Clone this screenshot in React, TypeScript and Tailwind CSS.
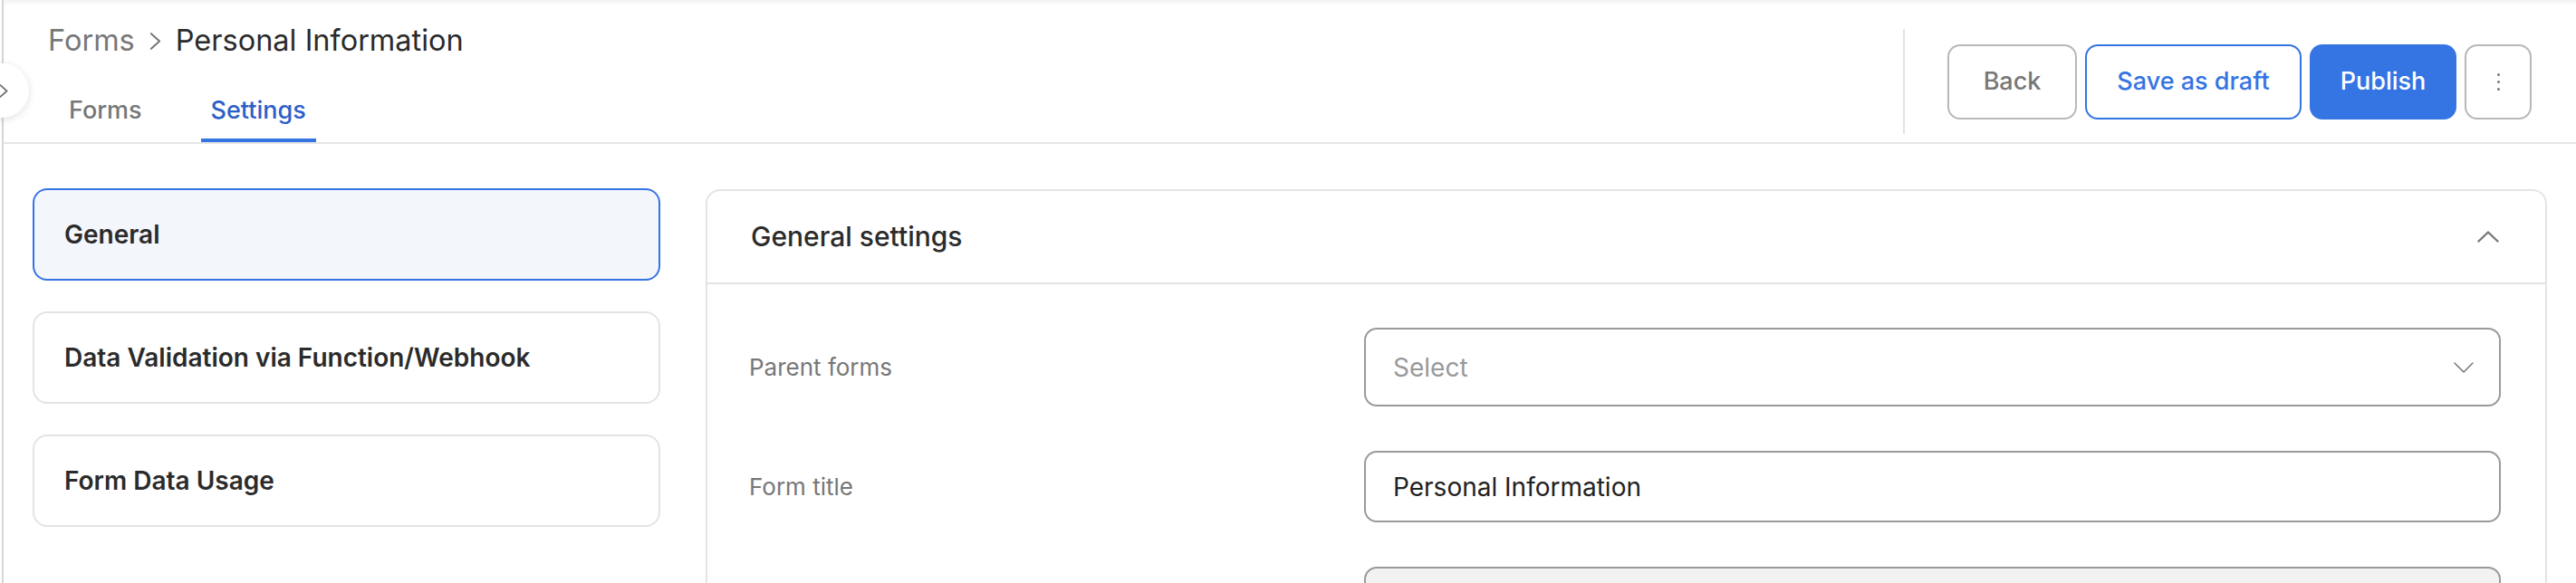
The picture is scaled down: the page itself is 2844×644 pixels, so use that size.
import React from "react";

function ChevronRight({ className, width = 2.2 }: { className?: string; width?: number }) {
  return (
    <svg className={className} viewBox="0 0 14 22" fill="none" stroke="currentColor" strokeWidth={width} strokeLinecap="round" strokeLinejoin="round">
      <polyline points="2,2 12,11 2,20" />
    </svg>
  );
}

function ChevronUp({ className }: { className?: string }) {
  return (
    <svg className={className} viewBox="0 0 24 13" fill="none" stroke="currentColor" strokeWidth="2.4" strokeLinecap="round" strokeLinejoin="round">
      <polyline points="1.5,11.5 12,1.5 22.5,11.5" />
    </svg>
  );
}

function ChevronDown({ className }: { className?: string }) {
  return (
    <svg className={className} viewBox="0 0 22 12" fill="none" stroke="currentColor" strokeWidth="1.5" strokeLinecap="round" strokeLinejoin="round">
      <polyline points="1,1 11,11 21,1" />
    </svg>
  );
}

const navItems = [
  { label: "General", active: true },
  { label: "Data Validation via Function/Webhook", active: false },
  { label: "Form Data Usage", active: false },
];

export default function App() {
  return (
    <div className="relative min-h-screen bg-white ml-[2px] border-l-2 border-[#d6d6d6] [font-family:Inter,'Noto_Sans',sans-serif] text-[#2b2b2b]">
      {/* collapse handle */}
      <div className="absolute left-[-32px] top-[70px] w-[60px] h-[60px] rounded-full bg-white shadow-[0_2px_10px_rgba(0,0,0,0.12)] flex items-center justify-center z-10">
        <ChevronRight className="w-[10px] h-[17px] text-[#777] ml-[3px]" width={2.6} />
      </div>

      {/* header */}
      <header className="flex justify-between h-[159px] border-b-2 border-[#e6e6e6] shadow-[inset_0_6px_6px_-4px_rgba(0,0,0,0.07)]">
        <div className="flex flex-col pl-[49px] pt-[25px]">
          <div className="flex items-center h-[40px] text-[32.5px] leading-[40px]">
            <span className="text-[#777]">Forms</span>
            <ChevronRight className="w-[13px] h-[21px] text-[#777] mx-[16px]" />
            <span className="text-[#2b2b2b]">Personal Information</span>
          </div>
          <div className="flex items-end mt-[39px] ml-[12px] gap-[54px]">
            <div className="px-[11px] pb-[13px] border-b-4 border-transparent text-[27px] leading-[36px] font-medium text-[#777]">
              Forms
            </div>
            <div className="px-[11px] pb-[13px] border-b-4 border-[#3574e3] text-[27px] leading-[36px] font-medium text-[#2d5fc9]">
              Settings
            </div>
          </div>
        </div>

        <div className="flex items-center self-start mt-[32px] h-[116px] mr-[49px]">
          <div className="w-[2px] h-full bg-[#e4e4e4]" />
          <div className="flex items-center gap-[9px] ml-[47px]">
            <button className="h-[83px] w-[143px] rounded-[14px] border-2 border-[#b8b8b8] bg-white text-[27px] font-medium text-[#777]">
              Back
            </button>
            <button className="h-[83px] w-[239px] rounded-[14px] border-2 border-[#3574e3] bg-white text-[27px] font-medium text-[#3574e3]">
              Save as draft
            </button>
            <button className="h-[83px] w-[162px] rounded-[14px] bg-[#3574e3] text-[27px] font-medium text-white">
              Publish
            </button>
            <button className="h-[83px] w-[74px] rounded-[14px] border-2 border-[#b8b8b8] bg-white flex flex-col items-center justify-center gap-[5px]">
              <span className="w-[3px] h-[3px] rounded-full bg-[#777]" />
              <span className="w-[3px] h-[3px] rounded-full bg-[#777]" />
              <span className="w-[3px] h-[3px] rounded-full bg-[#777]" />
            </button>
          </div>
        </div>
      </header>

      {/* body */}
      <div className="flex gap-[50px] px-[32px] pt-[49px]">
        <nav className="w-[693px] flex flex-col gap-[34px] shrink-0">
          {navItems.map((item) => (
            <div
              key={item.label}
              className={
                item.active
                  ? "h-[102px] rounded-[16px] border-2 border-[#3574e3] bg-[#f3f6fb] flex items-center px-[33px] text-[28px] font-semibold text-[#2b2b2b]"
                  : "h-[102px] rounded-[16px] border-2 border-[#e4e4e4] bg-white flex items-center px-[33px] text-[28px] font-semibold text-[#2b2b2b]"
              }
            >
              {item.label}
            </div>
          ))}
        </nav>

        <section className="flex-1 mt-px rounded-t-[16px] border-2 border-b-0 border-[#e4e4e4]">
          <div className="h-[103px] border-b-2 border-[#e4e4e4] flex items-center justify-between pl-[48px] pr-[51px]">
            <span className="text-[30px] font-medium text-[#2b2b2b]">General settings</span>
            <ChevronUp className="w-[24px] h-[13px] text-[#777]" />
          </div>

          <div className="grid grid-cols-[679px_1fr] pl-[46px] pr-[49px] pt-[48px] gap-y-[49px] items-center">
            <div className="text-[26px] text-[#777]">Parent forms</div>
            <div className="h-[87px] rounded-[14px] border-2 border-[#9a9a9a] flex items-center justify-between pl-[30px] pr-[28px]">
              <span className="text-[28px] text-[#999]">Select</span>
              <ChevronDown className="w-[22px] h-[12px] text-[#777]" />
            </div>

            <div className="text-[26px] text-[#777]">Form title</div>
            <div className="h-[79px] rounded-[14px] border-2 border-[#9a9a9a] flex items-center pl-[30px]">
              <span className="text-[28px] text-[#222]">Personal Information</span>
            </div>

            <div />
            <div className="h-[79px] rounded-[14px] border-2 border-[#9a9a9a] bg-[#f2f2f2]" />
          </div>
        </section>
      </div>
    </div>
  );
}
